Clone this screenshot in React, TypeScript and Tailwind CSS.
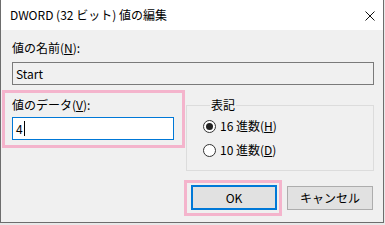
import React from 'react';

const font = { fontFamily: '"Noto Sans CJK JP", "Noto Sans", sans-serif' };

const Radio = ({ checked, label, mnemonic }: { checked?: boolean; label: string; mnemonic: string }) => (
  <div className="flex items-center h-4 gap-[4px]">
    <span className="w-[13px] h-[13px] rounded-full border border-[#333] bg-white flex items-center justify-center">
      {checked && <span className="w-[7px] h-[7px] rounded-full bg-[#222]" />}
    </span>
    <span className="text-[12px] leading-4 text-black">
      {label}(<span className="underline">{mnemonic}</span>)
    </span>
  </div>
);

export default function App() {
  return (
    <div className="w-[385px] h-[225px] bg-[#e8e8e8] overflow-hidden" style={font}>
      <div className="w-[384px] h-[223px] bg-[#f0f0f0] border-x border-b border-[#6d6d6d] flex flex-col">
        {/* Title bar */}
        <div className="h-[30px] bg-white flex items-center justify-between pl-[9px] pr-[8px] shrink-0">
          <span className="text-[12px] leading-4 text-black">DWORD (32 ビット) 値の編集</span>
          <svg width="10" height="10" viewBox="0 0 10 10" className="mt-[1px]">
            <path d="M0.5 0.5 L9.5 9.5 M9.5 0.5 L0.5 9.5" stroke="#111" strokeWidth="1" />
          </svg>
        </div>

        {/* Value name */}
        <div className="pt-[10px] pl-[11px] pr-[9px] flex flex-col gap-[6px]">
          <span className="text-[12px] leading-4 text-black">
            値の名前(<span className="underline">N</span>):
          </span>
          <div className="h-[23px] border border-[#7a7a7a] bg-[#f0f0f0] flex items-center px-[3px]">
            <span className="text-[12px] leading-4 text-black">Start</span>
          </div>
        </div>

        {/* Data + radix */}
        <div className="mt-[5px] pl-[1px] pr-[9px] flex items-start gap-[1px]">
          <div className="w-[183px] border-[3px] border-[#f4b4cc] pt-[4px] pl-[7px] pr-[8px] pb-[5px] flex flex-col gap-[4px]">
            <span className="text-[12px] leading-4 text-black">
              値のデータ(<span className="underline">V</span>):
            </span>
            <div className="h-[23px] border border-[#0078d7] bg-white flex items-center px-[3px]">
              <span className="text-[12px] leading-4 text-black">4</span>
              <span className="w-px h-[15px] bg-black ml-[1px]" />
            </div>
          </div>
          <fieldset className="flex-1 mt-[7px] border border-[#dcdcdc] pl-[16px] pb-[12px]">
            <legend className="ml-[7px] px-[1px] text-[12px] leading-4 text-black">表記</legend>
            <div className="mt-[5px] flex flex-col gap-[8px]">
              <Radio checked label="16 進数" mnemonic="H" />
              <Radio label="10 進数" mnemonic="D" />
            </div>
          </fieldset>
        </div>

        {/* Buttons */}
        <div className="mt-[9px] pr-[10px] flex justify-end items-start gap-[5px]">
          <div className="border-[3px] border-[#f4b4cc] pl-[4px] pr-[2px] pt-[2px] pb-[3px]">
            <button className="w-[86px] h-[25px] bg-[#e1e1e1] border-2 border-[#0078d7] text-[12px] text-black flex items-center justify-center">
              OK
            </button>
          </div>
          <button className="mt-[6px] w-[86px] h-[24px] bg-[#e1e1e1] border border-[#adadad] text-[12px] text-black flex items-center justify-center">
            キャンセル
          </button>
        </div>
      </div>
    </div>
  );
}
